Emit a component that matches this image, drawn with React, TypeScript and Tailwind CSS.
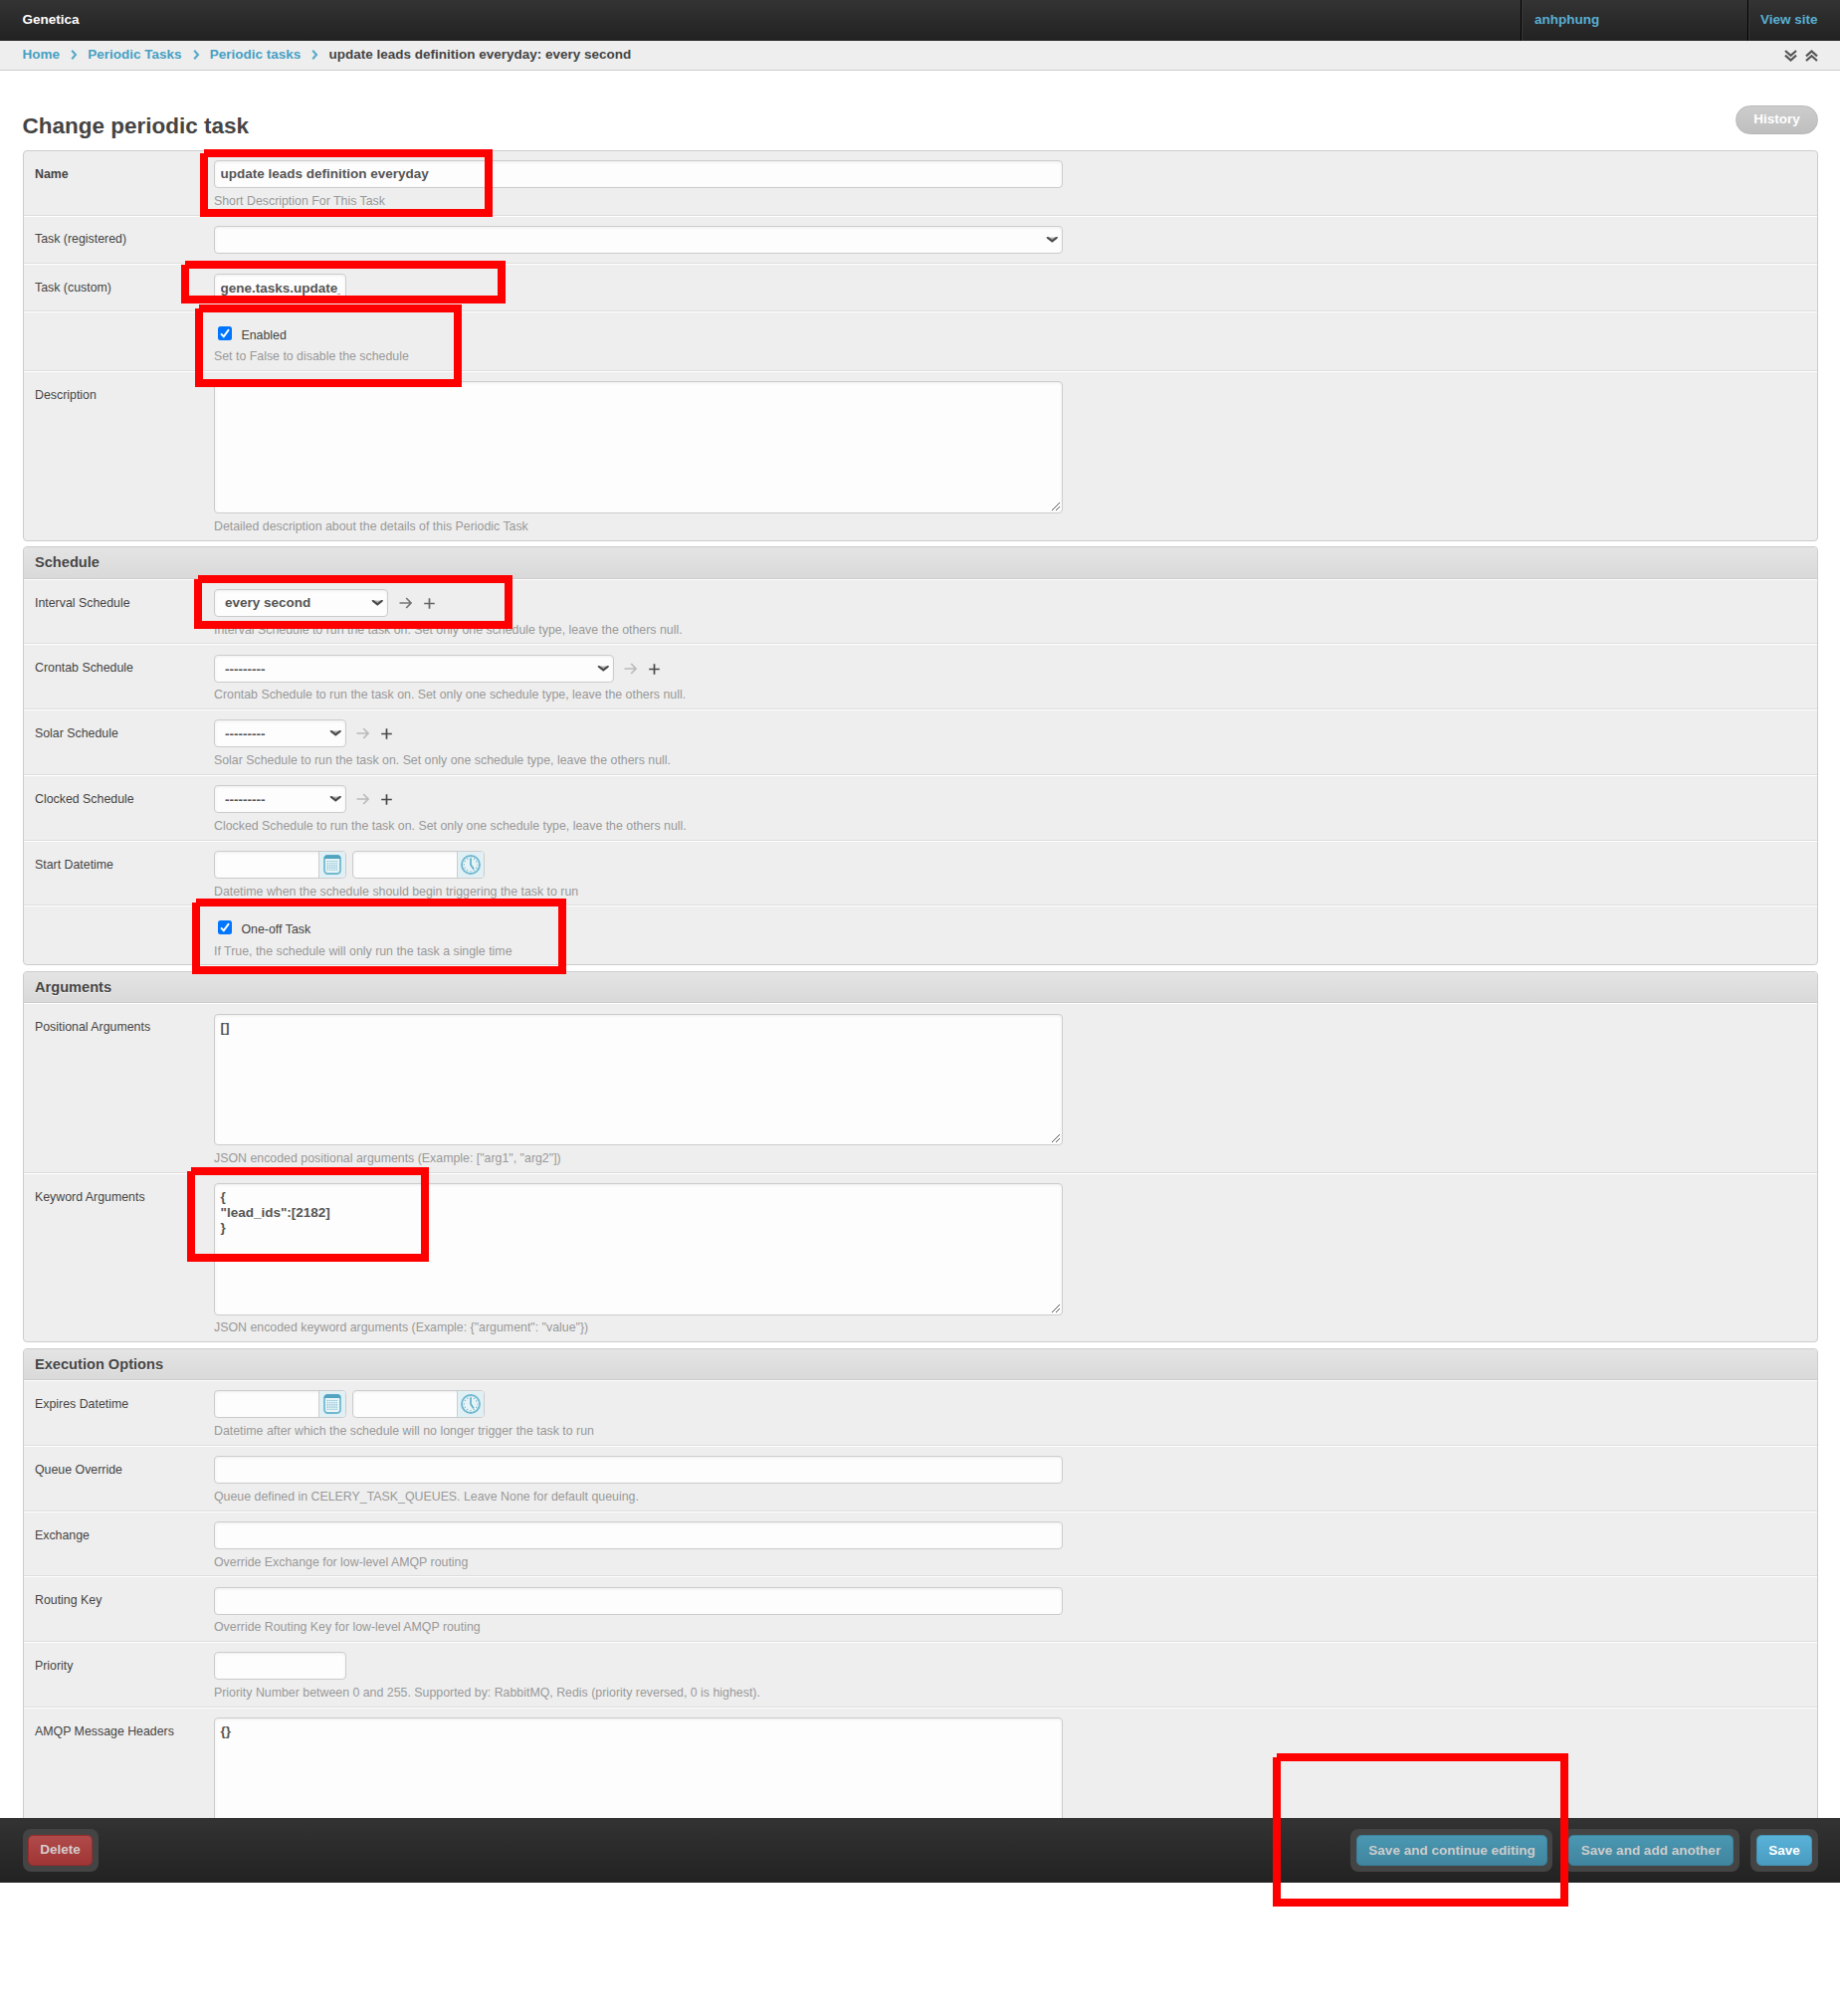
import type { ReactNode } from "react";

function Annotation({ d }: { d: string }) {
  return <path d={d} fill="none" stroke="#ff0000" strokeWidth="8" />;
}

function Chevron() {
  return (
    <svg width="13" height="8" viewBox="0 0 13 8" className="shrink-0">
      <path d="M0.5 1.2 L2.4 0.9 L6.3 3.6 L10.2 0.9 L12.1 1.2 L11.4 2.8 L6.3 6.8 L1.2 2.8 Z" fill="#4a4a4a" />
      <path d="M3.3 1.2 L6.3 1.8 L9.3 1.2 L6.3 4 Z" fill="#aaa" />
    </svg>
  );
}

const field =
  "box-border rounded-[4px] border border-[#ccc] bg-[#fdfdfd] shadow-[inset_0_1px_3px_#eee] text-[13.5px] font-bold text-[#555]";

function Input({ w = "w-[853px]", value = "", low = false }: { w?: string; value?: string; low?: boolean }) {
  return (
    <div className={`${field} ${w} flex h-7 items-center px-[5.5px] ${low ? "pt-0.5" : ""}`}>
      <span className="w-full overflow-hidden whitespace-nowrap leading-5">{value}</span>
    </div>
  );
}

function Select({ w, value = "", low = false }: { w: string; value?: string; low?: boolean }) {
  return (
    <div className={`${field} ${w} flex h-7 items-center justify-between pl-2.5 pr-[3px]`}>
      <span className={`leading-5 ${low ? "pt-0.5" : ""}`}>{value}</span>
      <Chevron />
    </div>
  );
}

function Related({ w, value, active = false }: { w: string; value: string; active?: boolean }) {
  return (
    <div className="flex items-center">
      <Select w={w} value={value} low={!active} />
      <svg width="13" height="12" viewBox="0 0 13 12" className={active ? "ml-[11px] text-[#777]" : "ml-2.5 text-[#bbb]"}>
        <path d="M0.5 6 H12 M7.2 1 L12 6 L7.2 11" fill="none" stroke="currentColor" strokeWidth="1.7" />
      </svg>
      <svg width="11" height="11" viewBox="0 0 11 11" className={active ? "ml-3 text-[#666]" : "ml-3 text-[#484848]"}>
        <path d="M0.2 5.5 H10.8 M5.5 0.2 V10.8" fill="none" stroke="currentColor" strokeWidth="1.7" />
      </svg>
    </div>
  );
}

function TextArea({ value = "", h = "h-[133px]" }: { value?: string; h?: string }) {
  return (
    <div className={`${field} ${h} flex w-[853px] justify-between pl-[5.5px] pt-[5px]`}>
      <pre className="font-[inherit] leading-[15.5px]">{value}</pre>
      <svg width="10" height="10" viewBox="0 0 10 10" className="mr-px mb-px self-end">
        <path d="M1 9 L9 1 M5 9 L9 5" stroke="#555" strokeWidth="1" />
      </svg>
    </div>
  );
}

function DateTime() {
  const half = `${field} flex h-7 w-[133px] justify-end overflow-hidden`;
  const button = "flex w-[27px] items-center justify-center border-l border-[#ccc] bg-[#e1f0f5]";
  return (
    <div className="flex gap-1.5">
      <div className={half}>
        <div className={button}>
          <svg width="18" height="20" viewBox="0 0 18 20">
            <rect x="1" y="1" width="16" height="18" rx="3.2" fill="#e6f3f7" stroke="#72b9cf" strokeWidth="1.8" />
            <path d="M0.6 4 Q0.6 0.2 4 0.2 H14 Q17.4 0.2 17.4 4 Z" fill="#51a4c0" />
            <path d="M3.7 6.5 H14.5 M3.7 8.7 H14.5 M3.7 10.9 H14.5 M3.7 13.1 H14.5 M3.7 15.3 H14.5" stroke="#7fbdd1" strokeWidth="1.1" strokeDasharray="1.3 0.9" />
          </svg>
        </div>
      </div>
      <div className={half}>
        <div className={button}>
          <svg width="20" height="20" viewBox="0 0 20 20">
            <circle cx="10" cy="10" r="9" fill="#e6f3f7" stroke="#72b9cf" strokeWidth="1.9" />
            <circle cx="10" cy="10" r="6.6" fill="none" stroke="#72b9cf" strokeWidth="1.3" strokeDasharray="1.1 2.356" strokeDashoffset="0.55" />
            <path d="M10 3.8 V10 L13 14.4" fill="none" stroke="#62afc8" strokeWidth="1.7" />
          </svg>
        </div>
      </div>
    </div>
  );
}

type RowProps = { h: string; label?: string; bold?: boolean; help?: string; helpGap?: string; first?: boolean; last?: boolean; lower?: boolean; raised?: boolean; children: ReactNode };

function Row({ h, label, bold, help, helpGap = "mt-1.5", first, last, lower, raised, children }: RowProps) {
  return (
    <div className={`${h} ${lower ? "pt-2.5" : "pt-[9px]"} ${first ? "" : "border-t border-t-white"} ${last ? "" : "border-b border-b-[#ddd]"} box-border flex`}>
      <div className={`w-[191px] shrink-0 pl-[11px] ${lower || raised ? "pt-1.5" : "pt-[7px]"} text-[12.375px] leading-[14px] ${bold ? "font-bold" : ""}`}>{label}</div>
      <div>
        {children}
        {help && <p className={`${helpGap} whitespace-nowrap text-[12.375px] leading-[14px] text-[#999]`}>{help}</p>}
      </div>
    </div>
  );
}

function CheckRow({ h, label, help, last }: { h: string; label: string; help: string; last?: boolean }) {
  return (
    <Row h={h} last={last}>
      <div className="flex h-[21px] pl-1 pt-[5px]">
        <svg width="14" height="14" viewBox="0 0 14 14">
          <rect width="14" height="14" rx="2.5" fill="#0075ff" />
          <path d="M3 7.4 L5.8 10.3 L11 3.2" fill="none" stroke="#fff" strokeWidth="2" />
        </svg>
        <span className="ml-[9.5px] mt-0.5 text-[12.375px] leading-[14px]">{label}</span>
      </div>
      <p className={`${last ? "mt-2" : "mt-[7px]"} text-[12.375px] leading-[14px] text-[#999]`}>{help}</p>
    </Row>
  );
}

function Module({ title, gap = "", head = "h-[31px]", children }: { title?: string; gap?: string; head?: string; children: ReactNode }) {
  return (
    <section className={`${gap} mx-[23px] w-[1804px] rounded-[4px] border border-[#ccc] bg-[#eee]`}>
      {title && (
        <h2 className={`${head} box-border rounded-t-[3px] border-b border-[#ccc] bg-linear-to-b from-[#e4e4e4] to-[#d9d9d9] pl-[11px] pt-1.5 text-[14.625px] font-bold leading-[18px] [text-shadow:0_1px_0_#f5f5f5]`}>
          {title}
        </h2>
      )}
      {children}
    </section>
  );
}

function Crumb({ children }: { children: string }) {
  return (
    <>
      <span className="text-[#46a0c4]">{children}</span>
      <svg width="7" height="10" viewBox="0 0 7 10" className="ml-[11px] mr-[10.2px] mt-[3px]">
        <path d="M1.2 0.8 L5 5 L1.2 9.2" fill="none" stroke="#59aac8" strokeWidth="2.1" />
      </svg>
    </>
  );
}

function FooterButton({ tone, children, w }: { tone: string; children: string; w: string }) {
  return (
    <div className={`${w} box-border h-[43px] rounded-[8px] bg-[#444] py-1.5`}>
      <div className={`${tone} box-border flex h-[31px] items-center justify-center whitespace-nowrap rounded-[5px] border text-[13.5px] font-bold leading-[15px]`}>{children}</div>
    </div>
  );
}

export default function App() {
  return (
    <div className="relative h-[2026px] w-[1849px] overflow-hidden bg-white font-['Liberation_Sans',Arial,sans-serif] text-[#444]">
      <header className="flex h-[41px] bg-linear-to-b from-[#333] to-[#222] text-[13.5px] font-bold leading-[15px]">
        <div className="flex-1 pl-[22.5px] pt-3 text-white">Genetica</div>
        <div className="w-[228px] border-l border-black pl-[13px] pt-3 text-[#59afd3] shadow-[inset_1px_0_0_#3a3a3a]">anhphung</div>
        <div className="w-[93px] whitespace-nowrap border-l border-black pl-3 pt-3 text-[#59afd3] shadow-[inset_1px_0_0_#3a3a3a]">View site</div>
      </header>
      <nav className="box-border flex h-[30px] items-start border-b border-[#ccc] bg-[#eee] px-[22.5px] pt-1.5 text-[13.5px] font-bold leading-[15px]">
        <Crumb>Home</Crumb>
        <Crumb>Periodic Tasks</Crumb>
        <Crumb>Periodic tasks</Crumb>
        <span>update leads definition everyday: every second</span>
        <div className="ml-auto mt-[3px] flex gap-2 text-[#555]">
          <svg width="13" height="12" viewBox="0 0 13 12"><path d="M1 1 L6.5 5.8 L12 1 M1 5.7 L6.5 10.5 L12 5.7" fill="none" stroke="currentColor" strokeWidth="2.2" /></svg>
          <svg width="13" height="12" viewBox="0 0 13 12"><path d="M1 6.3 L6.5 1.5 L12 6.3 M1 11 L6.5 6.2 L12 11" fill="none" stroke="currentColor" strokeWidth="2.2" /></svg>
        </div>
      </nav>
      <div className="flex h-20 justify-between pl-[22.5px] pr-[22px]">
        <h1 className="pt-[43px] text-[22.5px] font-bold leading-[26px]">Change periodic task</h1>
        <div className="mt-[35px] box-border flex h-[29px] w-[83px] justify-center rounded-full border border-[#b8b8b8] bg-linear-to-b from-[#cccccc] to-[#bfbfbf] pt-[5px] text-[13.5px] font-bold leading-[15px] text-white">History</div>
      </div>

      <Module>
        <Row first h="h-[65px]" label="Name" bold help="Short Description For This Task"><Input value="update leads definition everyday" /></Row>
        <Row raised h="h-12" label="Task (registered)"><Select w="w-[853px]" /></Row>
        <Row h="h-12" label="Task (custom)"><Input low w="w-[133px]" value="gene.tasks.update_" /></Row>
        <CheckRow h="h-[60px]" label="Enabled" help="Set to False to disable the schedule" />
        <Row last h="h-[170px]" label="Description" help="Detailed description about the details of this Periodic Task"><TextArea /></Row>
      </Module>

      <Module title="Schedule" gap="mt-[5px]" head="h-8">
        <Row h="h-[65px]" label="Interval Schedule" help="Interval Schedule to run the task on. Set only one schedule type, leave the others null."><Related active w="w-[175px]" value="every second" /></Row>
        <Row lower h="h-[66px]" helpGap="mt-[5px]" label="Crontab Schedule" help="Crontab Schedule to run the task on. Set only one schedule type, leave the others null."><Related w="w-[402px]" value="---------" /></Row>
        <Row h="h-[66px]" label="Solar Schedule" help="Solar Schedule to run the task on. Set only one schedule type, leave the others null."><Related w="w-[133px]" value="---------" /></Row>
        <Row h="h-[66px]" label="Clocked Schedule" help="Clocked Schedule to run the task on. Set only one schedule type, leave the others null."><Related w="w-[133px]" value="---------" /></Row>
        <Row h="h-[65px]" label="Start Datetime" help="Datetime when the schedule should begin triggering the task to run"><DateTime /></Row>
        <CheckRow last h="h-[59px]" label="One-off Task" help="If True, the schedule will only run the task a single time" />
      </Module>

      <Module title="Arguments" gap="mt-[6px]">
        <Row lower h="h-[171px]" label="Positional Arguments" help={'JSON encoded positional arguments (Example: ["arg1", "arg2"])'}><TextArea h="h-[132px]" value="[]" /></Row>
        <Row last helpGap="mt-[5px]" h="h-[169px]" label="Keyword Arguments" help={'JSON encoded keyword arguments (Example: {"argument": "value"})'}><TextArea value={'{\n"lead_ids":[2182]\n}'} /></Row>
      </Module>

      <Module title="Execution Options" gap="mt-[6px]">
        <Row h="h-[66px]" label="Expires Datetime" help="Datetime after which the schedule will no longer trigger the task to run"><DateTime /></Row>
        <Row h="h-[66px]" label="Queue Override" help="Queue defined in CELERY_TASK_QUEUES. Leave None for default queuing."><Input /></Row>
        <Row h="h-[65px]" label="Exchange" help="Override Exchange for low-level AMQP routing"><Input /></Row>
        <Row lower helpGap="mt-[5px]" h="h-[66px]" label="Routing Key" help="Override Routing Key for low-level AMQP routing"><Input /></Row>
        <Row h="h-[66px]" label="Priority" help="Priority Number between 0 and 255. Supported by: RabbitMQ, Redis (priority reversed, 0 is highest)."><Input w="w-[133px]" /></Row>
        <Row last h="h-[170px]" label="AMQP Message Headers"><TextArea value="{}" /></Row>
      </Module>

      <div className="absolute inset-x-0 top-[1827px] h-[199px] bg-white">
        <footer className="box-border flex h-[65px] items-start gap-[11px] bg-linear-to-b from-[#333] to-[#222] pl-[23px] pr-[22px] pt-[11px]">
          <FooterButton w="mr-auto w-[76px] pl-[5px] pr-1.5" tone="border-[#982c2c] bg-linear-to-b from-[#b04a4a] to-[#a03535] pb-0.5 text-[#d5cccc]">Delete</FooterButton>
          <FooterButton w="w-[203px] pl-1.5 pr-[5px]" tone="border-[#39809b] bg-linear-to-b from-[#4a97b1] to-[#41859f] text-[#cccccc]">Save and continue editing</FooterButton>
          <FooterButton w="w-[177px] pl-[5px] pr-1.5" tone="border-[#39809b] bg-linear-to-b from-[#4a97b1] to-[#41859f] text-[#cccccc]">Save and add another</FooterButton>
          <FooterButton w="w-[68px] pl-1.5 pr-1.5" tone="border-[#4394b8] bg-linear-to-b from-[#59b2d8] to-[#4a9bc0] text-white">Save</FooterButton>
        </footer>
      </div>

      <svg width="1849" height="2026" viewBox="0 0 1849 2026" className="pointer-events-none absolute left-0 top-0">
        <Annotation d="M205 154 H491 V214 H205 V154" />
        <Annotation d="M186 266 H504 V301 H186 V266" />
        <Annotation d="M200 310 H460 V385 H200 V310" />
        <Annotation d="M199 582 H511 V628 H199 V582" />
        <Annotation d="M197 907 H565 V975 H197 V907" />
        <Annotation d="M192 1177 H427 V1264 H192 V1177" />
        <Annotation d="M1283 1766 H1572 V1912 H1283 V1766" />
      </svg>
    </div>
  );
}
